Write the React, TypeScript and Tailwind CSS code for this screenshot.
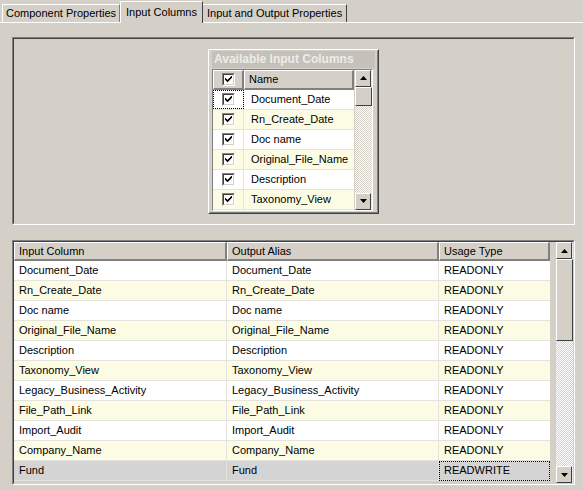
import React from 'react';

const available = ['Document_Date', 'Rn_Create_Date', 'Doc name', 'Original_File_Name', 'Description', 'Taxonomy_View'];

const mapped = [
  'Document_Date',
  'Rn_Create_Date',
  'Doc name',
  'Original_File_Name',
  'Description',
  'Taxonomy_View',
  'Legacy_Business_Activity',
  'File_Path_Link',
  'Import_Audit',
  'Company_Name',
  'Fund',
];

const Arrow = ({ dir }: { dir: 'up' | 'down' }) => (
  <div className="w-[16px] h-[17px] shrink-0 bg-[#d4d0c8] border border-t-white border-l-white border-r-[#404040] border-b-[#404040] flex items-center justify-center">
    <svg width="7" height="4" viewBox="0 0 7 4">
      {dir === 'up' ? <polygon points="3.5,0 7,4 0,4" fill="#000" /> : <polygon points="0,0 7,0 3.5,4" fill="#000" />}
    </svg>
  </div>
);

// classic sunken checkbox
const Check = () => (
  <div className="w-[13px] h-[13px] shrink-0 border border-t-[#808080] border-l-[#808080] border-r-white border-b-white">
    <div className="w-full h-full bg-white border border-t-[#404040] border-l-[#404040] border-r-[#d4d0c8] border-b-[#d4d0c8] flex items-center justify-center">
      <svg width="7" height="7" viewBox="0 0 7 7" className="block">
        <path d="M0.5 3 L2.5 5 L6.5 1" stroke="#000" strokeWidth="1.6" fill="none" strokeLinecap="square" />
      </svg>
    </div>
  </div>
);

const HeaderCell = ({ label, width }: { label: string; width: string }) => (
  <div className={`${width} h-[19px] shrink-0 bg-[#d4d0c8] border-t border-l border-t-white border-l-white border-r-2 border-b-2 border-r-[#808080] border-b-[#808080] flex items-center pl-[4px]`}>
    {label}
  </div>
);

export default function App() {
  return (
    <div className="w-[583px] h-[490px] bg-[#d4d0c8] overflow-hidden text-[11px] text-black font-['Liberation_Sans',Arial,sans-serif]">
      {/* tabs */}
      <div className="relative h-[23px] flex items-end pl-[2px] border-b border-white">
        <div className="h-[18px] px-[3px] flex items-center border-t border-l border-t-white border-l-white border-r border-r-[#808080]">
          Component Properties
        </div>
        <div className="relative h-[22px] -mb-px px-[5px] flex items-center bg-[#d4d0c8] border-t border-l border-t-white border-l-white border-r border-r-[#404040] z-10">
          Input Columns
        </div>
        <div className="h-[18px] px-[4px] flex items-center border-t border-t-white border-r border-r-[#404040]">
          Input and Output Properties
        </div>
      </div>

      <div className="pl-[12px] pr-[8px] pt-[14px]">
        {/* top panel */}
        <div className="h-[188px] border border-t-[#808080] border-l-[#808080] border-r-white border-b-white">
          <div className="h-full border border-t-[#404040] border-l-[#404040] border-r-[#d4d0c8] border-b-[#d4d0c8] flex items-center justify-center">
            <div className="w-[171px] h-[165px] border border-t-white border-l-white border-r-[#404040] border-b-[#404040]">
              <div className="h-full border border-t-[#d4d0c8] border-l-[#d4d0c8] border-r-[#808080] border-b-[#808080] px-[2px]">
                <div className="h-[17px] bg-[#c4c1bb] text-[#eeece6] font-bold text-[12px] flex items-center pl-[2px] overflow-hidden whitespace-nowrap">
                  Available Input Columns
                </div>
                <div className="mt-[1px] w-[161px] border border-t-[#808080] border-l-[#808080] border-r-white border-b-white flex">
                  <div className="flex flex-col w-[141px]">
                    <div className="flex">
                      <div className="w-[31px] h-[20px] bg-[#d4d0c8] border-t border-l border-t-white border-l-white border-r-2 border-b-2 border-r-[#808080] border-b-[#808080] flex items-center justify-center">
                        <Check />
                      </div>
                      <div className="w-[110px] h-[20px] bg-[#d4d0c8] border-t border-l border-t-white border-l-white border-r-2 border-b-2 border-r-[#808080] border-b-[#808080] flex items-center pl-[4px]">
                        Name
                      </div>
                    </div>
                    {available.map((name, i) => (
                      <div key={name} className={`flex h-[20px] border-b border-[#e4e3dd] ${i % 2 === 1 ? 'bg-[#fcfce4]' : 'bg-white'}`}>
                        <div className={`w-[31px] shrink-0 flex items-center justify-center border-r border-[#e4e3dd] ${i === 0 ? 'outline-1 outline-dotted outline-black -outline-offset-1' : ''}`}>
                          <Check />
                        </div>
                        <div className="flex-1 flex items-center pl-[7px] whitespace-nowrap">{name}</div>
                      </div>
                    ))}
                  </div>
                  <div className="w-[17px] ml-[1px] flex flex-col bg-[repeating-conic-gradient(#d4d0c8_0_25%,#ffffff_0_50%)] bg-size-[2px_2px]">
                    <Arrow dir="up" />
                    <div className="h-[19px] bg-[#d4d0c8] border border-t-white border-l-white border-r-[#404040] border-b-[#404040]" />
                    <div className="flex-1" />
                    <Arrow dir="down" />
                  </div>
                </div>
              </div>
            </div>
          </div>
        </div>

        {/* lower grid */}
        <div className="mt-[15px] h-[245px] border border-t-[#808080] border-l-[#808080] border-r-white border-b-white">
          <div className="h-full border border-t-[#404040] border-l-[#404040] border-r-[#d4d0c8] border-b-[#d4d0c8] flex">
            <div className="flex-1 flex flex-col">
              <div className="flex">
                <HeaderCell label="Input Column" width="w-[213px]" />
                <HeaderCell label="Output Alias" width="w-[212px]" />
                <HeaderCell label="Usage Type" width="w-[111px]" />
              </div>
              {mapped.map((name, i) => {
                const selected = i === mapped.length - 1;
                const bg = selected ? 'bg-[#d4d4d4]' : i % 2 === 1 ? 'bg-[#fcfce4]' : 'bg-white';
                return (
                  <div key={name} className={`flex w-[536px] h-[20px] ${bg}`}>
                    <div className="w-[213px] shrink-0 flex items-center pl-[5px] border-r border-b border-[#e4e3dd]">{name}</div>
                    <div className="w-[212px] shrink-0 flex items-center pl-[5px] border-r border-b border-[#e4e3dd]">{name}</div>
                    <div className={`w-[111px] shrink-0 flex items-center pl-[5px] border-b border-[#e4e3dd] ${selected ? 'outline-1 outline-dotted outline-black -outline-offset-1' : ''}`}>
                      {selected ? 'READWRITE' : 'READONLY'}
                    </div>
                  </div>
                );
              })}
            </div>
            <div className="w-[17px] flex flex-col bg-[repeating-conic-gradient(#d4d0c8_0_25%,#ffffff_0_50%)] bg-size-[2px_2px]">
              <Arrow dir="up" />
              <div className="h-[82px] bg-[#d4d0c8] border border-t-white border-l-white border-r-[#404040] border-b-[#404040]" />
              <div className="flex-1" />
              <Arrow dir="down" />
            </div>
          </div>
        </div>
      </div>
    </div>
  );
}
